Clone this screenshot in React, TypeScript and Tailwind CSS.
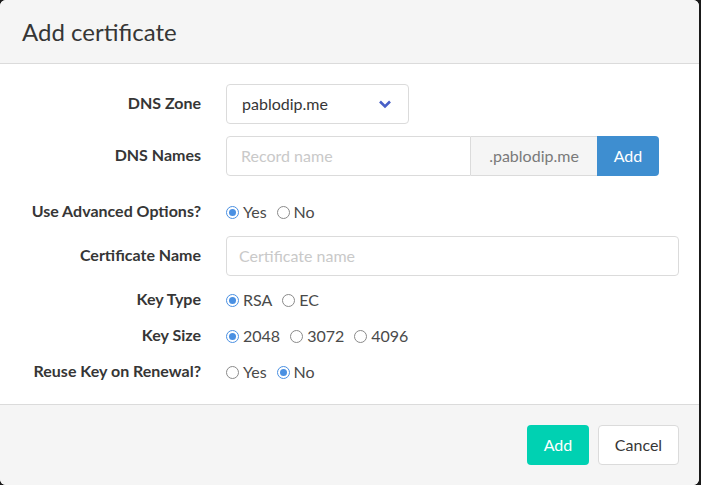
import React from 'react';

const labelFont = { fontFamily: 'Lato, "Liberation Sans", sans-serif' };

function Radio({ label, checked }: { label: string; checked?: boolean }) {
  return (
    <label className="flex items-center mr-[10px] text-[16px] text-[#4a4a4a]">
      <span
        className={`flex items-center justify-center w-[13px] h-[13px] rounded-full border mr-[4px] ${
          checked ? 'border-[#4a90e2] border-[1.5px]' : 'border-[#8a8a8a]'
        }`}
      >
        {checked && <span className="w-[7px] h-[7px] rounded-full bg-[#4a90e2]" />}
      </span>
      {label}
    </label>
  );
}

function Row({ label, tall, children }: { label: string; tall?: boolean; children: React.ReactNode }) {
  return (
    <div className={`flex items-center ${tall ? 'h-[40px]' : 'h-[24px]'}`}>
      <div
        className="w-[181px] mr-[25px] text-right font-bold text-[16px] text-[#363636] -translate-y-px"
        style={labelFont}
      >
        {label}
      </div>
      <div className="flex items-center flex-1">{children}</div>
    </div>
  );
}

export default function App() {
  return (
    <div
      className="w-[701px] h-[485px] bg-[#1a1a1a] overflow-hidden"
      style={{ fontFamily: 'Lato, "Liberation Sans", sans-serif' }}
    >
      <div className="w-[699px] h-[485px] rounded-[6px] overflow-hidden flex flex-col bg-white">
        {/* Header */}
        <header className="h-[64px] bg-[#f5f5f5] border-b border-[#dbdbdb] flex items-center px-[22px]">
          <h1 className="text-[24px] text-[#363636] leading-none">Add certificate</h1>
        </header>

        {/* Body */}
        <section className="flex-1 pt-5 pl-5 pr-5 flex flex-col">
          <Row label="DNS Zone" tall>
            <div className="w-[183px] h-[40px] border border-[#dbdbdb] rounded-[4px] flex items-center justify-between pl-[15px] pr-[16px] text-[16px] text-[#363636]">
              <span>pablodip.me</span>
              <svg width="14" height="10" viewBox="0 0 14 10">
                <polyline points="2,2.5 7,7.5 12,2.5" fill="none" stroke="#485fc7" strokeWidth="2.6" />
              </svg>
            </div>
          </Row>

          <div className="h-[12px]" />
          <Row label="DNS Names" tall>
            <div className="flex h-[40px]">
              <div className="w-[245px] border border-[#dbdbdb] rounded-l-[4px] flex items-center px-[14px] text-[16px] text-[#c9c9c9]">
                Record name
              </div>
              <div className="w-[126px] bg-[#f5f5f5] border-y border-[#dbdbdb] flex items-center justify-center text-[16px] text-[#7a7a7a]">
                .pablodip.me
              </div>
              <button className="w-[62px] bg-[#3e8ed0] text-white rounded-r-[4px] text-[16px]">Add</button>
            </div>
          </Row>

          <div className="h-[24px]" />
          <Row label="Use Advanced Options?">
            <Radio label="Yes" checked />
            <Radio label="No" />
          </Row>

          <div className="h-[12px]" />
          <Row label="Certificate Name" tall>
            <div className="flex-1 h-[40px] border border-[#dbdbdb] rounded-[4px] flex items-center px-[12px] text-[16px] text-[#c9c9c9]">
              Certificate name
            </div>
          </Row>

          <div className="h-[12px]" />
          <Row label="Key Type">
            <Radio label="RSA" checked />
            <Radio label="EC" />
          </Row>

          <div className="h-[12px]" />
          <Row label="Key Size">
            <Radio label="2048" checked />
            <Radio label="3072" />
            <Radio label="4096" />
          </Row>

          <div className="h-[12px]" />
          <Row label="Reuse Key on Renewal?">
            <Radio label="Yes" />
            <Radio label="No" checked />
          </Row>
        </section>

        {/* Footer */}
        <footer className="h-[81px] bg-[#f5f5f5] border-t border-[#dbdbdb] flex items-center justify-end pr-[20px] gap-[9px]">
          <button className="w-[62px] h-[40px] rounded-[4px] bg-[#00d1b2] text-white text-[16px]">Add</button>
          <button className="w-[81px] h-[40px] rounded-[4px] bg-white border border-[#dbdbdb] text-[#363636] text-[16px]">
            Cancel
          </button>
        </footer>
      </div>
    </div>
  );
}
